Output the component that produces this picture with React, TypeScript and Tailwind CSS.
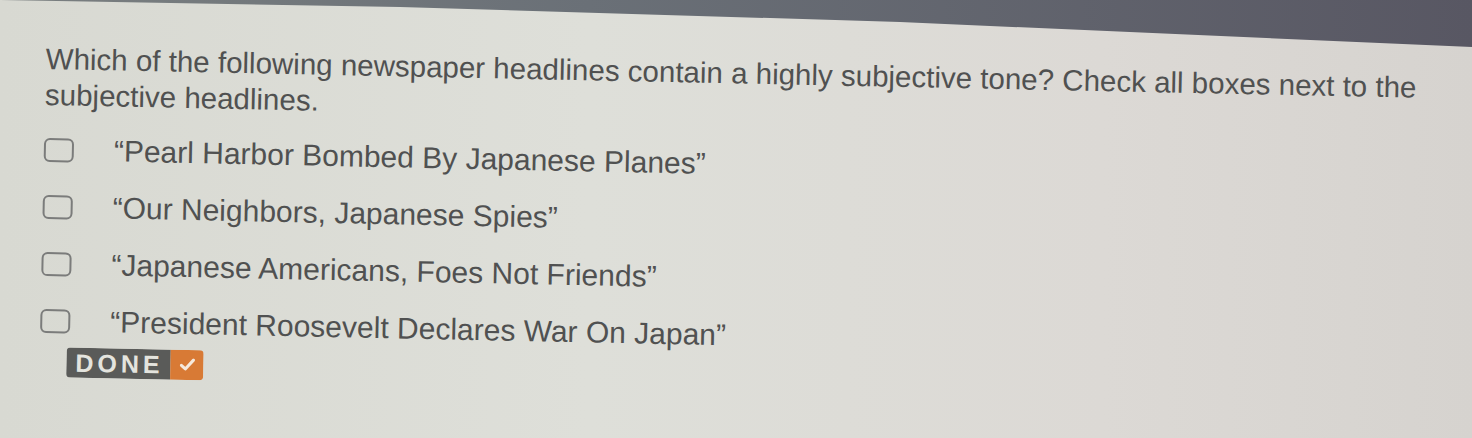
import React from 'react';

const options = [
  '“Pearl Harbor Bombed By Japanese Planes”',
  '“Our Neighbors, Japanese Spies”',
  '“Japanese Americans, Foes Not Friends”',
  '“President Roosevelt Declares War On Japan”',
];

export default function App() {
  return (
    <div
      className="relative w-[1472px] h-[438px] overflow-hidden bg-[linear-gradient(90deg,#d8d9d2,#dedfd9_40%,#dcd9d5_75%,#d6d3cf)]"
      style={{ fontFamily: '"Liberation Sans", Arial, sans-serif' }}
    >
      {/* dark screen bezel across the top of the photo */}
      <svg className="absolute left-0 top-0" width="1472" height="50" viewBox="0 0 1472 50">
        <defs>
          <linearGradient id="bezel" x1="0" x2="1" y1="0" y2="0">
            <stop offset="0" stopColor="#7a7f80" />
            <stop offset="0.4" stopColor="#6a7077" />
            <stop offset="1" stopColor="#585763" />
          </linearGradient>
        </defs>
        <polygon points="0,0 1472,0 1472,47 900,22 400,7 0,0" fill="url(#bezel)" />
      </svg>

      <div className="origin-top-left rotate-[1.2deg] pl-[47px] pt-[40px] text-[#505151]">
        <p className="text-[29.5px] leading-[36px] w-[1420px]">
          Which of the following newspaper headlines contain a highly subjective tone? Check all boxes next to the
          subjective headlines.
        </p>

        <div className="mt-[18px] flex flex-col gap-[20px]">
          {options.map((o) => (
            <label key={o} className="flex items-center">
              <span className="w-[30px] h-[24px] rounded-[6px] border-2 border-[#7b7c7b] shrink-0" />
              <span className="ml-[40px] text-[30px] leading-[37px]">{o}</span>
            </label>
          ))}
        </div>

        <button
          type="button"
          className="mt-[8px] ml-[27px] flex items-stretch h-[30px] rounded-[4px] overflow-hidden"
        >
          <span className="bg-[#5a5b59] text-[#e4e4de] font-bold text-[25px] tracking-[4px] pl-[9px] pr-[7px] flex items-center leading-none">
            DONE
          </span>
          <span className="bg-[#d87a35] w-[33px] flex items-center justify-center">
            <svg width="16" height="14" viewBox="0 0 16 14">
              <path d="M2 7.5 L6 11 L14 2" fill="none" stroke="#f6e9dc" strokeWidth="3" strokeLinecap="round" strokeLinejoin="round" />
            </svg>
          </span>
        </button>
      </div>
    </div>
  );
}
